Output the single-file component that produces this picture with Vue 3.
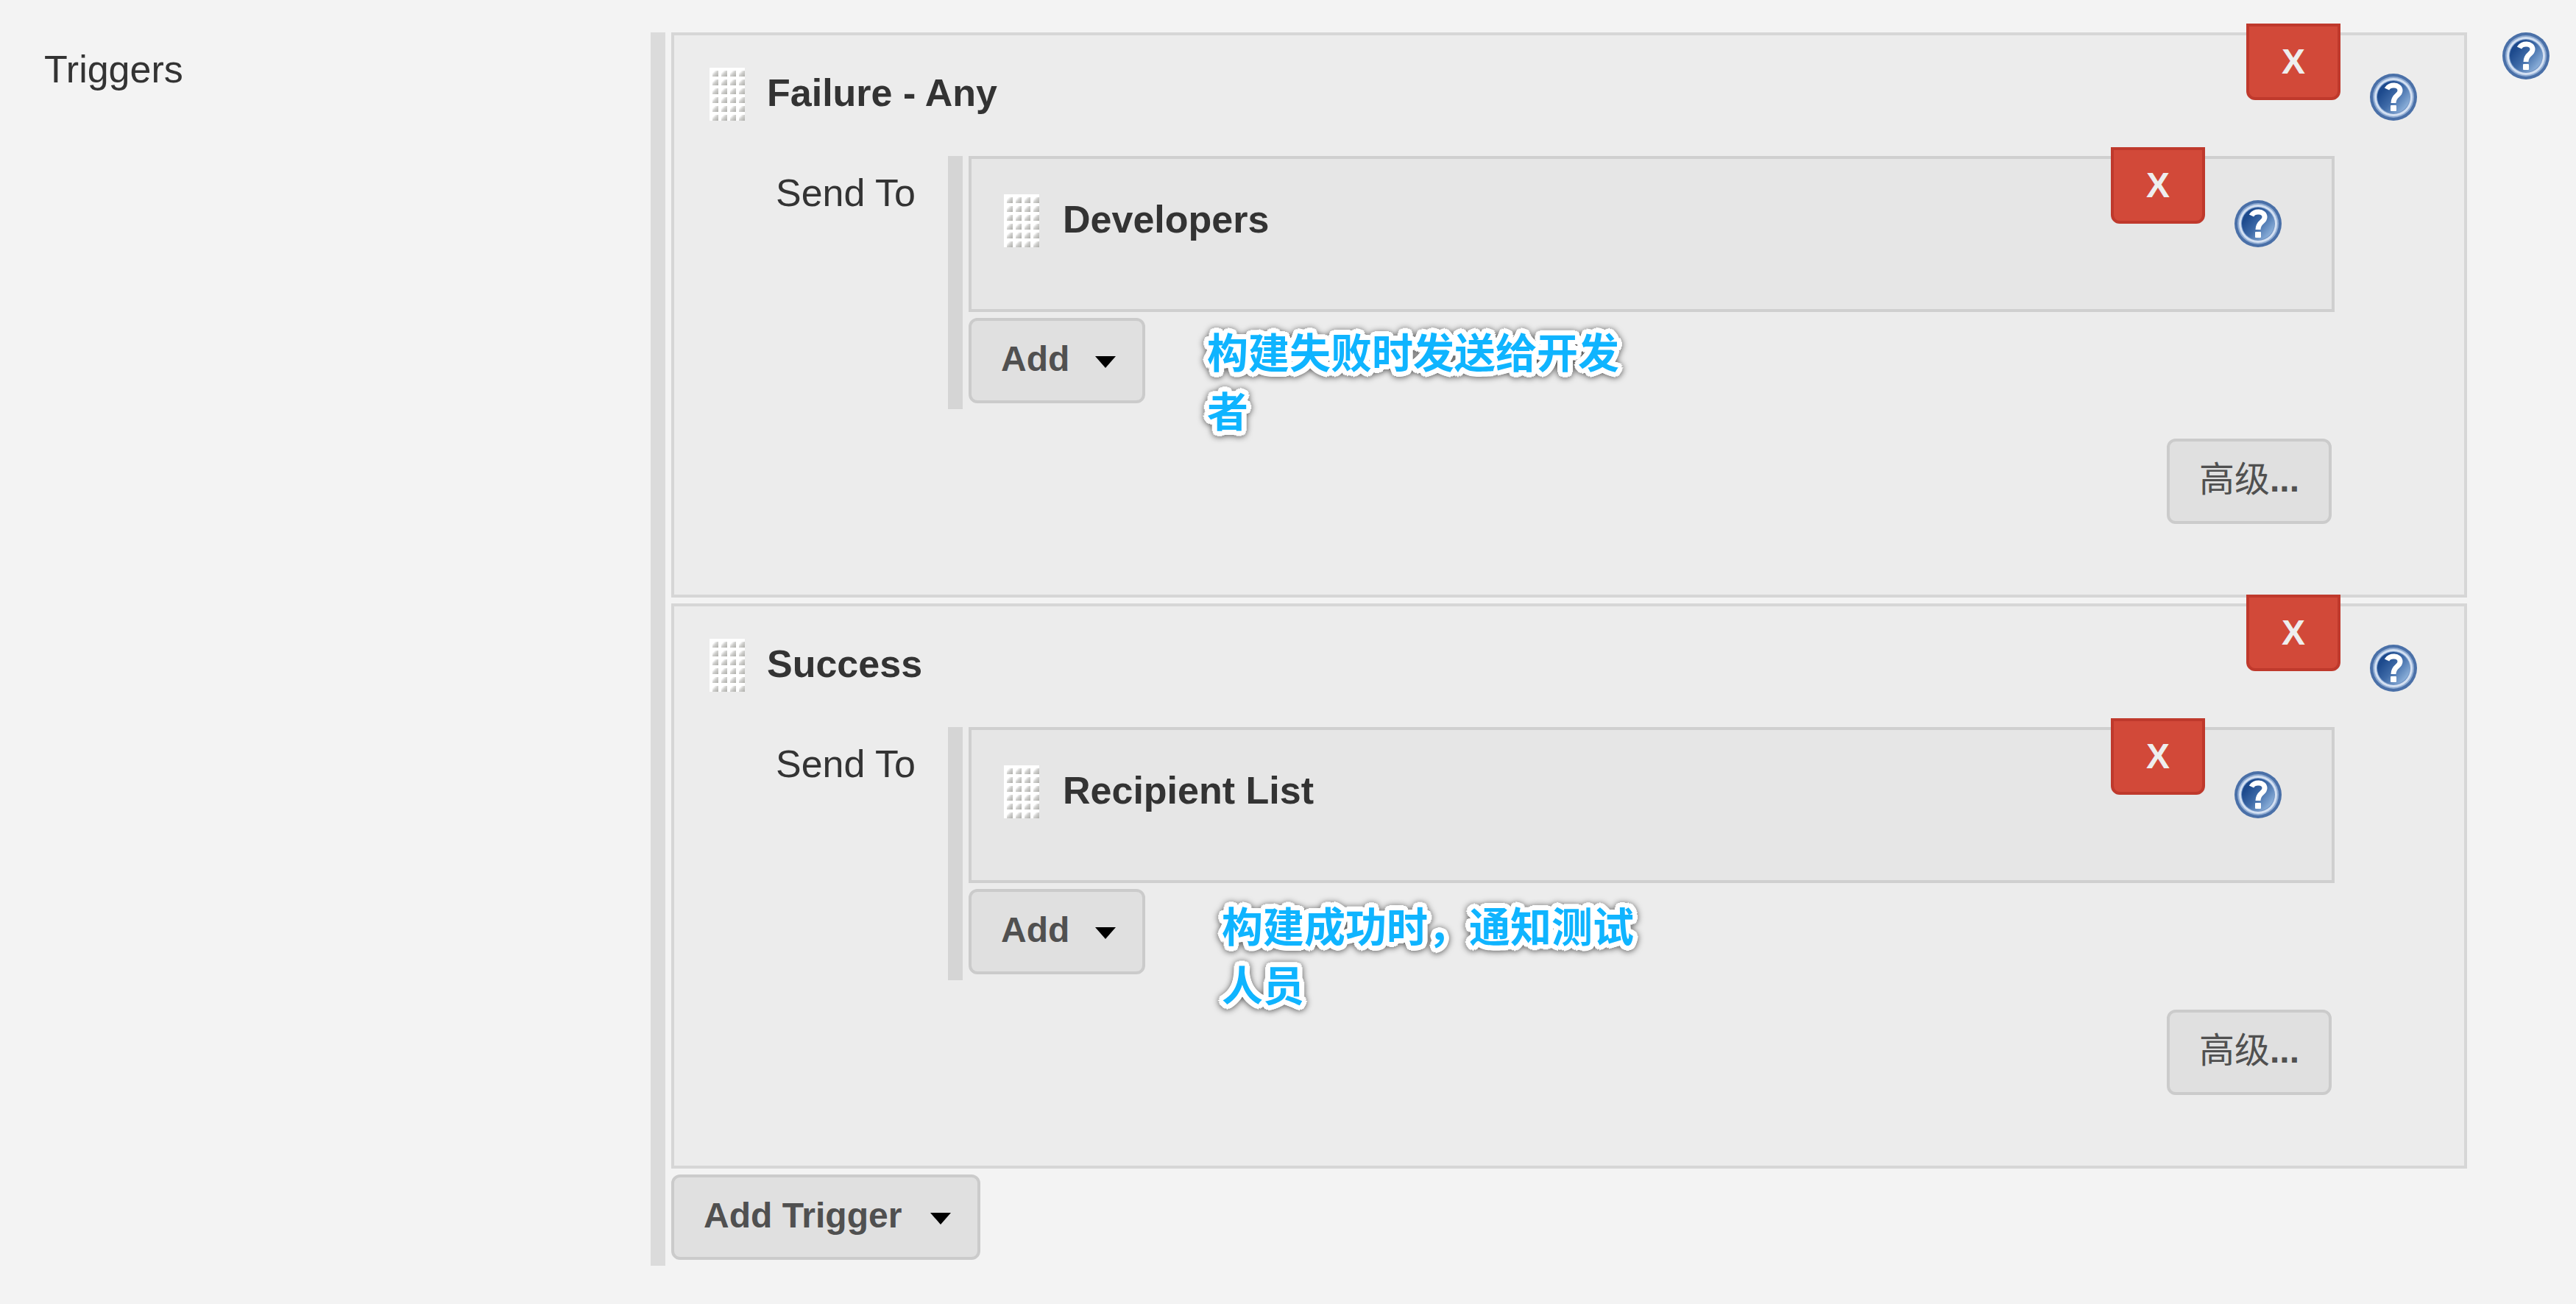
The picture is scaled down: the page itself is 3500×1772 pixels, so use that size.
<script setup>
import { h } from 'vue'

const triggers = [
  { name: 'Failure - Any', recipient: 'Developers', note: '构建失败时发送给开发者', noteClass: 'note-failure' },
  { name: 'Success', recipient: 'Recipient List', note: '构建成功时，通知测试人员', noteClass: 'note-success' },
]

const HelpIcon = () =>
  h('svg', { viewBox: '0 0 64 64', width: 64, height: 64, 'aria-hidden': 'true' }, [
    h('defs', [
      h('linearGradient', { id: 'help-fill', x1: '0.1', y1: '0.2', x2: '0.9', y2: '0.85' }, [
        h('stop', { offset: '0.1', 'stop-color': '#1d4a8d' }),
        h('stop', { offset: '0.5', 'stop-color': '#3f6ba8' }),
        h('stop', { offset: '1', 'stop-color': '#8fb3dc' }),
      ]),
    ]),
    h('circle', { cx: 32, cy: 32, r: 32, fill: '#4a70a8' }),
    h('circle', { cx: 32, cy: 32, r: 28, fill: '#8fabd2' }),
    h('circle', { cx: 32, cy: 32, r: 26, fill: '#d3e0f2' }),
    h('circle', { cx: 32, cy: 32, r: 23, fill: '#6f92c4' }),
    h('circle', { cx: 32, cy: 32, r: 22, fill: 'url(#help-fill)' }),
    h('path', {
      d: 'M23 21C26 14 41 14 41 23C41 30 32 29 32 40',
      fill: 'none',
      stroke: '#fff',
      'stroke-width': 7,
    }),
    h('rect', { x: 28, y: 43, width: 8, height: 8, rx: 1, fill: '#fff' }),
  ])
</script>

<template>
  <main class="page">
    <div class="field-label page-label">Triggers</div>
    <div class="nested">
      <section v-for="t in triggers" :key="t.name" class="box trigger">
        <button type="button" class="remove">X</button>
        <header class="box-head">
          <span class="grip"></span>
          <b class="title">{{ t.name }}</b>
          <a href="#" class="help" aria-label="Help"><HelpIcon /></a>
        </header>
        <div class="send-row">
          <div class="field-label send-label">Send To</div>
          <div class="nested inner">
            <section class="box recipient">
              <button type="button" class="remove">X</button>
              <header class="box-head">
                <span class="grip"></span>
                <b class="title">{{ t.recipient }}</b>
                <a href="#" class="help" aria-label="Help"><HelpIcon /></a>
              </header>
            </section>
            <div class="add-row">
              <button type="button" class="btn">Add<i class="caret"></i></button>
              <p class="note" :class="t.noteClass">{{ t.note }}</p>
            </div>
          </div>
        </div>
        <div class="advanced-row">
          <button type="button" class="btn advanced"><span class="cjk">高级</span>...</button>
        </div>
      </section>
      <button type="button" class="btn add-trigger">Add Trigger<i class="caret"></i></button>
    </div>
    <a href="#" class="help page-help" aria-label="Help"><HelpIcon /></a>
  </main>
</template>

<style>
body {
  margin: 0;
  background: #f3f3f3;
}
</style>

<style scoped>
.page {
  display: flex;
  align-items: flex-start;
  padding: 44px 36px 52px 0;
  color: #333;
  font: 52px/60px "Liberation Sans", Arial, "Noto Sans CJK SC", sans-serif;
}
.field-label {
  flex: none;
  box-sizing: border-box;
  padding-top: 20px;
}
.page-label {
  width: 884px;
  padding-left: 60px;
}
.send-label {
  width: 372px;
  padding-left: 138px;
}
.nested {
  flex: 1;
  min-width: 0;
  border-left: 20px solid #dbdbdb;
  padding: 0 0 8px 8px;
}
.inner {
  border-left-color: #d5d5d5;
}
.box {
  position: relative;
  margin-bottom: 8px;
  border: 4px solid #d6d6d6;
  background: #ececec;
}
.recipient {
  border-color: #cfcfcf;
  background: #e6e6e6;
}
.box-head {
  display: flex;
  align-items: flex-start;
  gap: 30px;
  padding: 44px 64px 48px 48px;
}
.recipient .box-head {
  gap: 32px;
  padding: 48px 68px 84px 44px;
}
.grip {
  width: 48px;
  height: 72px;
  background:
    linear-gradient(90deg, #fff 4px, transparent 4px) 0 0 / 12px 12px,
    linear-gradient(#fff 4px, transparent 4px) 0 0 / 12px 12px,
    linear-gradient(135deg, #fff 46%, #d0d0ce 66%, #adada9 100%) 0 0 / 12px 12px;
}
.title {
  flex: 1;
  line-height: 68px;
}
.help {
  display: block;
  width: 64px;
  height: 64px;
}
.help svg {
  display: block;
}
.box-head .help {
  margin-top: 8px;
}
.page-help {
  flex: none;
  margin-left: 48px;
}
.remove {
  position: absolute;
  top: -16px;
  right: 168px;
  width: 128px;
  height: 104px;
  padding: 0;
  border: 4px solid #bf392c;
  border-radius: 0 0 12px 12px;
  background: #d24939;
  color: #eee;
  font: bold 48px/56px "Liberation Sans", Arial, sans-serif;
}
.recipient .remove {
  right: 172px;
}
.send-row {
  display: flex;
  align-items: flex-start;
  padding-right: 176px;
}
.add-row {
  position: relative;
  display: flex;
}
.btn {
  display: flex;
  align-items: flex-start;
  box-sizing: border-box;
  height: 116px;
  padding: 24px 36px 0 40px;
  border: 4px solid #cbcbcb;
  border-radius: 12px;
  background: #e0e0e0;
  color: #505050;
  font: bold 48px/56px "Liberation Sans", Arial, "Noto Sans CJK SC", sans-serif;
}
.add-trigger {
  min-width: 420px;
}
.caret {
  margin: 24px 0 0 auto;
  border: 14px solid transparent;
  border-top: 16px solid #000;
  border-bottom: 0;
}
.add-row .btn {
  min-width: 240px;
}
.advanced-row {
  display: flex;
  justify-content: flex-end;
  padding: 40px 180px 96px 0;
}
.advanced {
  padding-right: 40px;
}
.cjk {
  font-weight: 400;
}
.note {
  position: absolute;
  width: 568px;
  margin: 0;
  color: #0fb4ff;
  font: bold 56px/80px "Noto Sans CJK SC", sans-serif;
  text-shadow:
    7px 0 #fff, -7px 0 #fff, 0 7px #fff, 0 -7px #fff,
    5px 5px #fff, -5px 5px #fff, 5px -5px #fff, -5px -5px #fff,
    6px 3px #fff, -6px 3px #fff, 6px -3px #fff, -6px -3px #fff,
    3px 6px #fff, -3px 6px #fff, 3px -6px #fff, -3px -6px #fff,
    3px 0 #fff, -3px 0 #fff, 0 3px #fff, 0 -3px #fff;
  filter: drop-shadow(0 1px 4px rgba(0, 0, 0, 0.65));
}
.note-failure {
  top: 4px;
  left: 324px;
}
.note-success {
  top: 8px;
  left: 344px;
}
</style>
